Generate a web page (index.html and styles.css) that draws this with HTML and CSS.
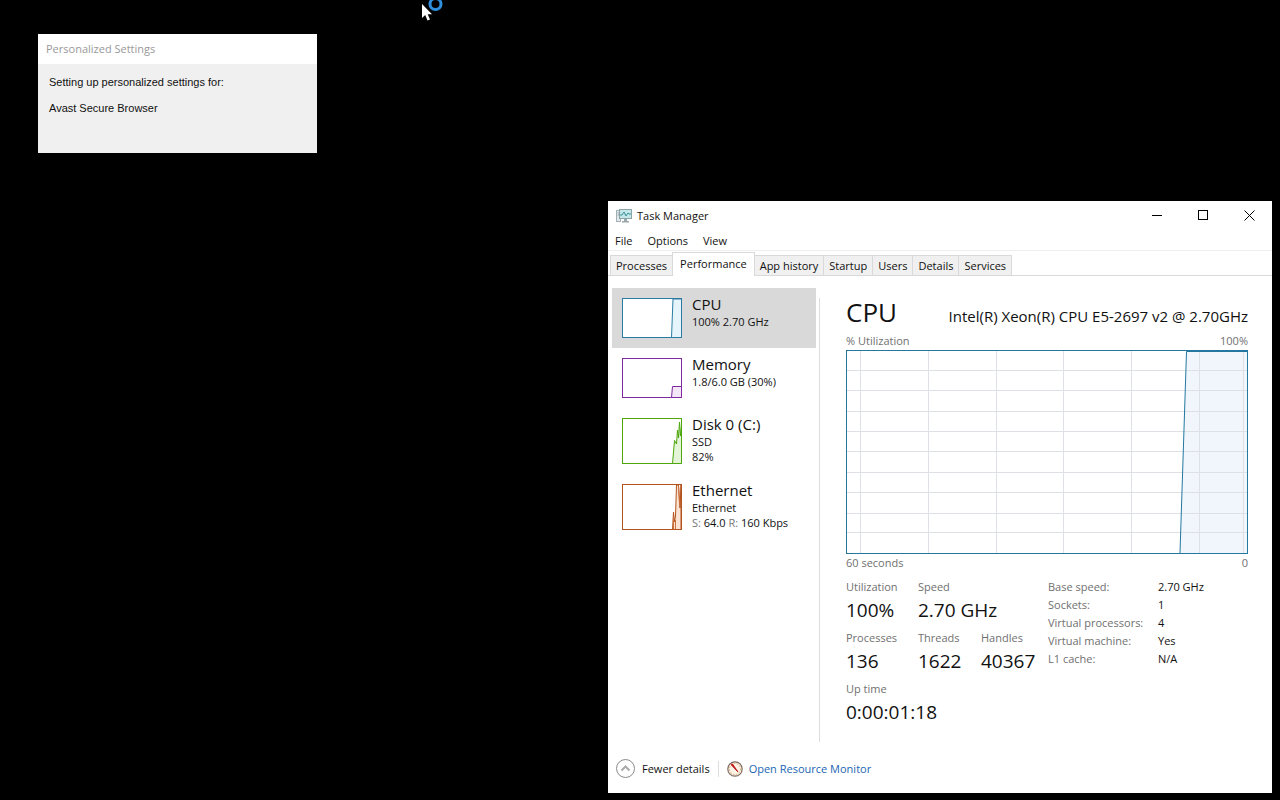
FILE: index.html
```html
<!DOCTYPE html>
<html lang="en">
<head>
  <meta charset="UTF-8" />
  <meta name="viewport" content="width=device-width, initial-scale=1.0" />
  <title>Task Manager</title>
  <link rel="stylesheet" href="styles.css">
</head>
<body>
  <main class="desktop">

    <!-- ============================
         Personalized Settings dialog
         ============================ -->
    <section class="dialog">
      <h2 class="dialog-title">Personalized Settings</h2>
      <div class="dialog-body">
        <p>Setting up personalized settings for:</p>
        <p>Avast Secure Browser</p>
      </div>
    </section>

    <!-- ============================
         Task Manager window
         ============================ -->
    <section class="window">
      <header class="title-bar">
        <svg class="app-icon" width="16" height="16" viewBox="0 0 16 16" aria-hidden="true">
          <rect x="0.5" y="2.5" width="4" height="11" fill="#e4eaec" stroke="#a3b0b4" />
          <path d="M1.5 5h2M1.5 7h2" stroke="#8fa5ab" />
          <rect x="3.5" y="1.5" width="12" height="9" fill="#c4e6e6" stroke="#8ba4aa" />
          <path d="M4 7h2l2-3 2 4 2-3 1 1h2" fill="none" stroke="#3a939b" />
          <path d="M8 11h3v2h2v1.500H6V13h2z" fill="#9aa7ab" />
        </svg>
        <h1>Task Manager</h1>
        <div class="window-buttons">
          <button type="button" aria-label="Minimize">
            <svg width="11" height="11" viewBox="0 0 11 11"><path d="M0 5.500h10" stroke="#000" /></svg>
          </button>
          <button type="button" aria-label="Maximize">
            <svg width="11" height="11" viewBox="0 0 11 11"><rect x="0.5" y="0.5" width="9" height="9" fill="none" stroke="#000" /></svg>
          </button>
          <button type="button" aria-label="Close">
            <svg width="11" height="11" viewBox="0 0 11 11"><path d="M0.500 0.500l10 10M10.500 0.500l-10 10" stroke="#000" /></svg>
          </button>
        </div>
      </header>

      <nav class="menu-bar">
        <button type="button">File</button>
        <button type="button">Options</button>
        <button type="button">View</button>
      </nav>

      <div class="tabs" role="tablist">
        <button type="button" role="tab">Processes</button>
        <button type="button" role="tab" class="active" aria-selected="true">Performance</button>
        <button type="button" role="tab">App history</button>
        <button type="button" role="tab">Startup</button>
        <button type="button" role="tab">Users</button>
        <button type="button" role="tab">Details</button>
        <button type="button" role="tab">Services</button>
      </div>

      <div class="content">
        <!-- Resource list -->
        <div class="resources">
          <button type="button" class="resource selected">
            <svg class="thumb" width="60" height="40" viewBox="0 0 60 40">
              <rect x="0.5" y="0.5" width="59" height="39" fill="#fff" stroke="#2a7ba3" />
              <path d="M49.500 39.500L51 1H59.500V39.500z" fill="#e6f4fb" stroke="#2a7ba3" />
            </svg>
            <span class="resource-text">
              <span class="resource-name">CPU</span>
              <span>100% 2.70 GHz</span>
            </span>
          </button>
          <button type="button" class="resource">
            <svg class="thumb" width="60" height="40" viewBox="0 0 60 40">
              <rect x="0.5" y="0.5" width="59" height="39" fill="#fff" stroke="#8028a0" />
              <path d="M49.500 39.500L50.500 28.500H59.500V39.500z" fill="#f3e6f8" stroke="#8028a0" />
            </svg>
            <span class="resource-text">
              <span class="resource-name">Memory</span>
              <span>1.8/6.0 GB (30%)</span>
            </span>
          </button>
          <button type="button" class="resource">
            <svg class="thumb" width="60" height="46" viewBox="0 0 60 46">
              <rect x="0.5" y="0.5" width="59" height="45" fill="#fff" stroke="#4da60c" />
              <path d="M50.500 45.500L51.500 34 52.500 22.500 54.500 26 55.500 12 56.500 20 57.500 4 58.500 18 59.500 8V45.500z" fill="#e4f4d8" stroke="#4da60c" />
            </svg>
            <span class="resource-text">
              <span class="resource-name">Disk 0 (C:)</span>
              <span>SSD</span>
              <span>82%</span>
            </span>
          </button>
          <button type="button" class="resource">
            <svg class="thumb" width="60" height="46" viewBox="0 0 60 46">
              <rect x="0.5" y="0.5" width="59" height="45" fill="#fff" stroke="#b3541e" />
              <path d="M50.500 45.500L51.500 28 52.500 38 53.500 32 54.500 1H56.500L58 24 59 1V45.500z" fill="#fae3d3" stroke="#b3541e" />
              <path d="M51.500 45V34M53.500 45V36M56.500 2L57.500 20" fill="none" stroke="#d0703a" />
            </svg>
            <span class="resource-text">
              <span class="resource-name">Ethernet</span>
              <span>Ethernet</span>
              <span><span class="muted">S:</span> 64.0 <span class="muted">R:</span> 160 Kbps</span>
            </span>
          </button>
        </div>

        <!-- CPU details -->
        <div class="details">
          <div class="details-head">
            <h2>CPU</h2>
            <p>Intel(R) Xeon(R) CPU E5-2697 v2 @ 2.70GHz</p>
          </div>
          <div class="axis"><span>% Utilization</span><span>100%</span></div>
          <svg class="graph" viewBox="0 0 402 204" preserveAspectRatio="none">
            <rect x="0" y="0" width="402" height="204" fill="#fff" />
            <path class="graph-fill" d="M334 203L340.500 1H401V203z" />
            <path class="graph-grid" d="M14.500 1V203M82.500 1V203M150.500 1V203M217.500 1V203M285.500 1V203M353.500 1V203M397.500 1V203M1 20.500H401M1 40.500H401M1 61.500H401M1 81.500H401M1 101.500H401M1 122.500H401M1 142.500H401M1 163.500H401M1 182.500H401" />
            <path class="graph-line" d="M334 203L340.500 1.500H401" />
            <rect class="graph-line" x="0.5" y="0.5" width="401" height="203" />
          </svg>
          <div class="axis"><span>60 seconds</span><span>0</span></div>

          <div class="summary">
            <dl class="stats">
              <div><dt>Utilization</dt><dd>100%</dd></div>
              <div class="wide"><dt>Speed</dt><dd>2.70 GHz</dd></div>
              <div><dt>Processes</dt><dd>136</dd></div>
              <div><dt>Threads</dt><dd>1622</dd></div>
              <div><dt>Handles</dt><dd>40367</dd></div>
              <div class="full"><dt>Up time</dt><dd>0:00:01:18</dd></div>
            </dl>
            <table class="specs">
              <tr><th scope="row">Base speed:</th><td>2.70 GHz</td></tr>
              <tr><th scope="row">Sockets:</th><td>1</td></tr>
              <tr><th scope="row">Virtual processors:</th><td>4</td></tr>
              <tr><th scope="row">Virtual machine:</th><td>Yes</td></tr>
              <tr><th scope="row">L1 cache:</th><td>N/A</td></tr>
            </table>
          </div>
        </div>
      </div>

      <footer class="status-bar">
        <button type="button" class="fewer">
          <svg width="20" height="20" viewBox="0 0 20 20" aria-hidden="true">
            <circle cx="9.500" cy="9.500" r="9" fill="#fff" stroke="#8a8a8a" />
            <path d="M5.500 11.500l4-4 4 4" fill="none" stroke="#aaa" stroke-width="2" />
          </svg>
          Fewer details
        </button>
        <a href="#" class="monitor">
          <svg width="16" height="16" viewBox="0 0 16 16" aria-hidden="true">
            <circle cx="8" cy="8" r="7.200" fill="#fbf3e6" stroke="#7d6a5e" stroke-width="1.200" />
            <circle cx="8" cy="8" r="5.500" fill="none" stroke="#dba878" stroke-dasharray="1.500 1.500" />
            <path d="M4 3.500l1.500-.5 5.500 8z" fill="#c01818" stroke="#c01818" />
          </svg>
          <span>Open Resource Monitor</span>
        </a>
      </footer>
    </section>

    <!-- Busy cursor -->
    <svg class="cursor" width="24" height="24" viewBox="0 0 24 24" aria-hidden="true">
      <circle cx="14.500" cy="4" r="5.500" fill="none" stroke="#2f8fdc" stroke-width="3" />
      <path d="M1 4V18L4.200 15 6.500 20.500 9 19.400 6.700 14.200H11z" fill="#fff" />
    </svg>
  </main>
</body>
</html>
```
FILE: styles.css
```css
/* ============================
   Basic Reset
   ============================ */
* {
  margin: 0;
  padding: 0;
  box-sizing: border-box;
}

body {
  background-color: #000;
  color: #111;
  font-family: "Open Sans", "Noto Sans", sans-serif;
  font-size: 11px;
  line-height: 16px;
}

button {
  background: none;
  border: none;
  color: inherit;
  font: inherit;
  text-align: left;
}

h1,
h2,
th {
  font-weight: normal;
}

svg {
  display: block;
  flex-shrink: 0;
}

.desktop {
  position: relative;
  min-height: 100vh;
  overflow: hidden;
}

.cursor {
  position: absolute;
  left: 421px;
  top: 0;
}

/* ============================
   Settings Dialog
   ============================ */
.dialog {
  position: absolute;
  left: 38px;
  top: 34px;
  width: 279px;
  background-color: #f0f0f0;
}

.dialog-title {
  padding: 0 8px;
  background-color: #fff;
  color: #999;
  font-size: 11px;
  line-height: 30px;
}

.dialog-body {
  padding: 10px 11px 37px;
  font-family: "Liberation Sans", Arial, sans-serif;
}

.dialog-body p + p {
  margin-top: 10px;
}

/* ============================
   Task Manager Window
   ============================ */
.window {
  position: absolute;
  left: 608px;
  top: 201px;
  width: 664px;
  background-color: #fff;
}

.title-bar {
  display: flex;
  align-items: center;
  height: 30px;
  padding-left: 8px;
}

.title-bar h1 {
  margin-left: 5px;
  font-size: 11px;
}

.window-buttons {
  display: flex;
  align-self: flex-start;
  margin-left: auto;
}

.window-buttons button {
  display: flex;
  align-items: center;
  justify-content: center;
  width: 46px;
  height: 29px;
}

.menu-bar {
  display: flex;
  gap: 15px;
  height: 20px;
  padding: 1px 7px 0;
  border-bottom: 1px solid #eee;
}

/* ============================
   Tabs
   ============================ */
.tabs {
  display: flex;
  align-items: flex-end;
  height: 25px;
  padding: 0 3px;
  border-bottom: 1px solid #d9d9d9;
}

.tabs button {
  height: 20px;
  padding: 1px 5px 0;
  background-color: #f0f0f0;
  border: 1px solid #d9d9d9;
  border-bottom: none;
  margin-left: -1px;
}

.tabs .active {
  height: 24px;
  padding: 0 7px 2px;
  margin-bottom: -1px;
  background-color: #fff;
}

/* ============================
   Resource List
   ============================ */
.content {
  display: flex;
  padding: 12px 24px 0 4px;
}

.resources {
  flex: 0 0 204px;
}

.resource {
  display: flex;
  align-items: flex-start;
  gap: 10px;
  width: 100%;
  padding: 10px;
}

.resource.selected {
  background-color: #d9d9d9;
}

.resource-text {
  display: flex;
  flex-direction: column;
  line-height: 15px;
  margin: -4px 0;
  white-space: nowrap;
}

.resource-name {
  font-size: 15px;
  line-height: 20px;
}

.muted {
  color: #777;
}

/* ============================
   CPU Details
   ============================ */
.details {
  flex: 1;
  min-width: 0;
  margin: 10px 0 0 3px;
  padding: 0 0 16px 26px;
  border-left: 1px solid #ddd;
}

.details-head {
  display: flex;
  align-items: baseline;
  justify-content: space-between;
  padding-bottom: 3px;
  line-height: 28px;
}

.details-head h2 {
  font-size: 26px;
}

.details-head p {
  font-size: 15px;
}

.axis {
  display: flex;
  justify-content: space-between;
  color: #707070;
}

.graph {
  width: 100%;
  height: 204px;
  margin: 1px 0;
}

.graph-fill {
  fill: #f0f6fb;
}

.graph-grid {
  fill: none;
  stroke: #dde1e5;
}

.graph-line {
  fill: none;
  stroke: #2478a0;
}

.summary {
  display: flex;
  align-items: flex-start;
  padding-top: 8px;
}

.stats {
  display: grid;
  grid-template-columns: 72px 63px auto;
  row-gap: 6px;
  flex: 0 0 202px;
}

.stats .wide {
  grid-column: span 2;
}

.stats .full {
  grid-column: 1 / -1;
}

.stats dt,
.specs th {
  color: #707070;
  text-align: left;
}

.stats dd {
  margin-top: 1px;
  font-size: 19px;
  line-height: 28px;
}

.specs {
  border-collapse: collapse;
  margin-top: -1px;
  line-height: 18px;
}

.specs th {
  width: 110px;
}

/* ============================
   Status Bar
   ============================ */
.status-bar {
  display: flex;
  align-items: center;
  padding: 17px 8px 14px;
}

.fewer,
.monitor {
  display: flex;
  align-items: center;
  gap: 6px;
}

.fewer {
  padding-right: 8px;
}

.monitor {
  padding-left: 8px;
  border-left: 1px solid #ddd;
  color: #1a66b3;
  text-decoration: none;
}
```
